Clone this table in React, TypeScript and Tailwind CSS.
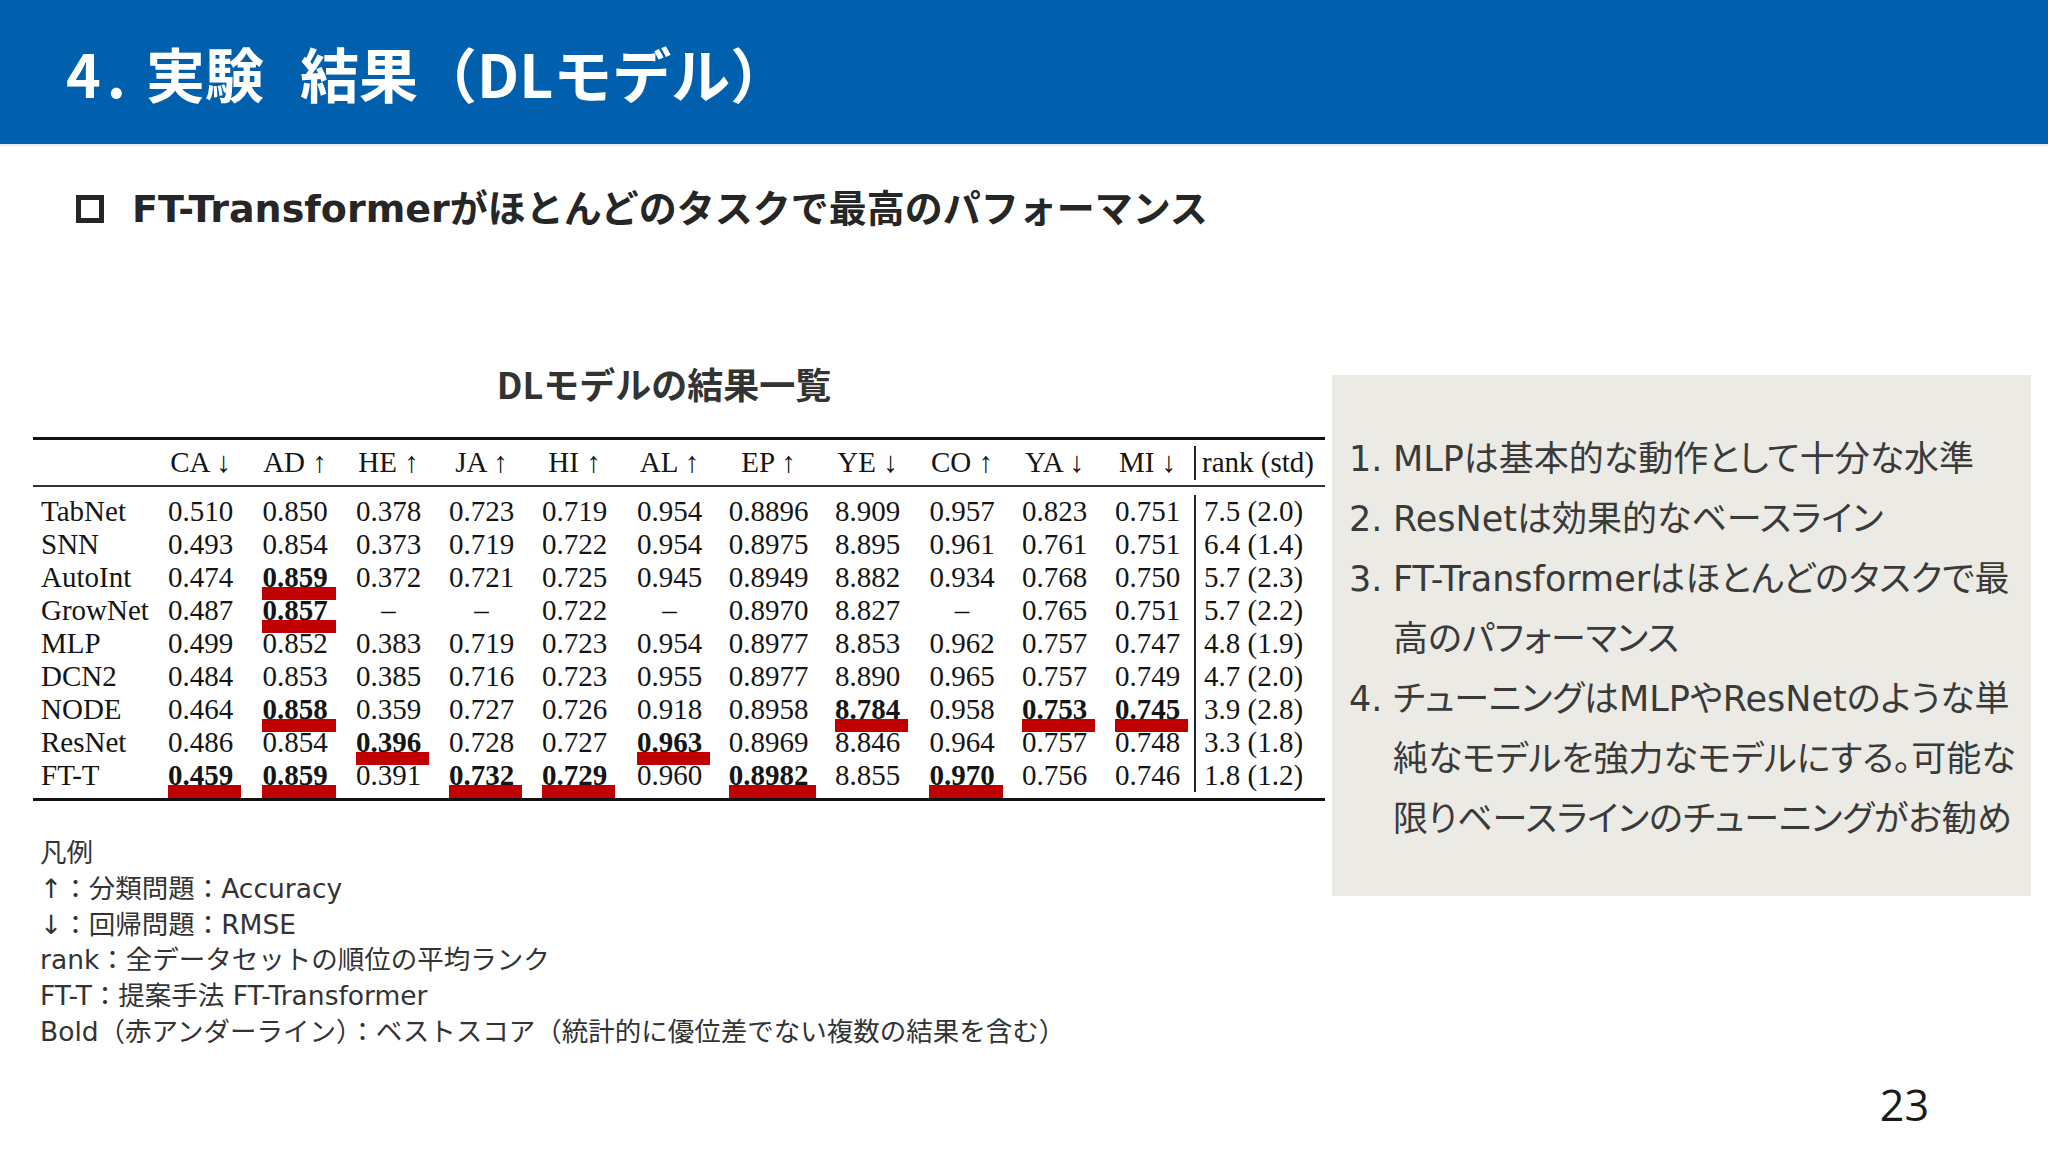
const HEAD = ['', 'CA ↓', 'AD ↑', 'HE ↑', 'JA ↑', 'HI ↑', 'AL ↑', 'EP ↑', 'YE ↓', 'CO ↑', 'YA ↓', 'MI ↓'];

// "*" marks a best score (bold + red underline)
const ROWS: string[][] = [
  ['TabNet', '0.510', '0.850', '0.378', '0.723', '0.719', '0.954', '0.8896', '8.909', '0.957', '0.823', '0.751', '7.5 (2.0)'],
  ['SNN', '0.493', '0.854', '0.373', '0.719', '0.722', '0.954', '0.8975', '8.895', '0.961', '0.761', '0.751', '6.4 (1.4)'],
  ['AutoInt', '0.474', '0.859*', '0.372', '0.721', '0.725', '0.945', '0.8949', '8.882', '0.934', '0.768', '0.750', '5.7 (2.3)'],
  ['GrowNet', '0.487', '0.857*', '–', '–', '0.722', '–', '0.8970', '8.827', '–', '0.765', '0.751', '5.7 (2.2)'],
  ['MLP', '0.499', '0.852', '0.383', '0.719', '0.723', '0.954', '0.8977', '8.853', '0.962', '0.757', '0.747', '4.8 (1.9)'],
  ['DCN2', '0.484', '0.853', '0.385', '0.716', '0.723', '0.955', '0.8977', '8.890', '0.965', '0.757', '0.749', '4.7 (2.0)'],
  ['NODE', '0.464', '0.858*', '0.359', '0.727', '0.726', '0.918', '0.8958', '8.784*', '0.958', '0.753*', '0.745*', '3.9 (2.8)'],
  ['ResNet', '0.486', '0.854', '0.396*', '0.728', '0.727', '0.963*', '0.8969', '8.846', '0.964', '0.757', '0.748', '3.3 (1.8)'],
  ['FT-T', '0.459*', '0.859*', '0.391', '0.732*', '0.729*', '0.960', '0.8982*', '8.855', '0.970*', '0.756', '0.746', '1.8 (1.2)'],
];

const GRID = 'grid grid-cols-[120px_95px_94px_93px_93px_93px_97px_101px_97px_92px_93px_93px_130px]';

function Cell({ v }: { v: string }) {
  if (!v.endsWith('*')) return <span>{v}</span>;
  return (
    <span className="relative font-bold">
      {v.slice(0, -1)}
      <span className="absolute left-0 -right-[8px] top-[26px] h-[13px] bg-[#c00000]" />
    </span>
  );
}

function ResultTable() {
  return (
    <div className="font-['Liberation_Serif',serif] text-[29px] text-[#151515] border-t-[3px] border-b-[3px] border-[#111]">
      <div className={`${GRID} h-[47px] items-center border-b-2 border-[#333]`}>
        {HEAD.map((h, i) => (
          <div key={i} className="text-center whitespace-nowrap">{h}</div>
        ))}
        <div className="flex items-center h-[34px] border-l-2 border-[#222] pl-[6px] whitespace-nowrap">rank (std)</div>
      </div>
      <div className="pt-[8px] pb-[6px]">
        {ROWS.map((r) => (
          <div key={r[0]} className={`${GRID} h-[33px] leading-[33px]`}>
            <div className="pl-[8px] whitespace-nowrap">{r[0]}</div>
            {r.slice(1, 12).map((v, i) => (
              <div key={i} className="text-center whitespace-nowrap">
                <Cell v={v} />
              </div>
            ))}
            <div className="border-l-2 border-[#222] pl-[8px] whitespace-nowrap">{r[12]}</div>
          </div>
        ))}
      </div>
    </div>
  );
}

const POINTS = [
  ['1.', ['MLPは基本的な動作として十分な水準']],
  ['2.', ['ResNetは効果的なベースライン']],
  ['3.', ['FT-Transformerはほとんどのタスクで最', '高のパフォーマンス']],
  ['4.', ['チューニングはMLPやResNetのような単', '純なモデルを強力なモデルにする。可能な', '限りベースラインのチューニングがお勧め']],
] as const;

const LEGEND = [
  '凡例',
  '↑：分類問題：Accuracy',
  '↓：回帰問題：RMSE',
  'rank：全データセットの順位の平均ランク',
  'FT-T：提案手法 FT-Transformer',
  'Bold（赤アンダーライン）：ベストスコア（統計的に優位差でない複数の結果を含む）',
];

// latin runs in a Verdana-like face, Japanese in Noto CJK
const JP = "font-['DejaVu_Sans','Noto_Sans_CJK_JP',sans-serif]";

export default function App() {
  return (
    <div className="w-[2048px] h-[1152px] bg-white overflow-hidden font-['Noto_Sans_CJK_JP',sans-serif]">
      {/* Title bar */}
      <div className="h-[144px] bg-[#0060ae] flex items-center pl-[66px]">
        <h1 className="text-white font-bold text-[59px] leading-none whitespace-nowrap">
          4<span className="ml-[6px]">.</span>
          <span className="ml-[20px]">実験</span>
          <span className="ml-[36px]">結果（DLモデル）</span>
        </h1>
      </div>
      <div className="h-[2px] bg-[#e3edf6]" />

      {/* Headline */}
      <div className="mt-[38px] flex items-center h-[50px] pl-[76px] text-[#262626]">
        <span className="w-[28px] h-[28px] border-[5px] border-[#262626]" />
        <span className={`ml-[28px] text-[38px] font-bold leading-none whitespace-nowrap ${JP}`}>
          FT-Transformerがほとんどのタスクで最高のパフォーマンス
        </span>
      </div>

      <div className="mt-[126px] flex items-start">
        {/* Left: table + legend */}
        <div className="ml-[33px] w-[1292px]">
          <div className="h-[46px] flex items-center justify-center pr-[30px] text-[36px] font-bold text-[#333]">
            DLモデルの結果一覧
          </div>
          <div className="mt-[31px]">
            <ResultTable />
          </div>
          <div className={`mt-[34px] pl-[7px] text-[26.5px] leading-[35.8px] text-[#333] ${JP}`}>
            {LEGEND.map((l) => (
              <div key={l} className="whitespace-nowrap">{l}</div>
            ))}
          </div>
        </div>

        {/* Right: summary panel */}
        <div className={`ml-[7px] mt-[15px] w-[699px] h-[521px] bg-[#ebeae4] pt-[54px] pl-[17px] text-[35px] leading-[60px] text-[#3a3a3a] [font-feature-settings:'palt'] ${JP}`}>
          {POINTS.map(([n, lines]) => (
            <div key={n} className="flex">
              <span className="w-[44px] shrink-0">{n}</span>
              <div>
                {lines.map((t) => (
                  <div key={t} className="whitespace-nowrap">{t}</div>
                ))}
              </div>
            </div>
          ))}
        </div>
      </div>

      <div className="flex justify-end pr-[119px] mt-[33px]">
        <span className="font-['Open_Sans',sans-serif] text-[43px] leading-none text-[#1a1a1a]">23</span>
      </div>
    </div>
  );
}
